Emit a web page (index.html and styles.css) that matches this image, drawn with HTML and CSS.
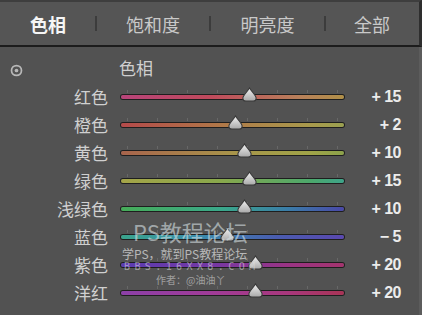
FILE: index.html
```html
<!DOCTYPE html>
<html>
<head>
<meta charset="utf-8">
<link rel="stylesheet" href="styles.css">
</head>
<body>
  <div id="tabs">
    <div class="tab active">色相</div>
    <div class="tab">饱和度</div>
    <div class="tab">明亮度</div>
    <div class="tab">全部</div>
  </div>

  <div id="panel">
    <div class="panel-header">
      <svg class="target" width="13" height="13" viewBox="0 0 12 12">
        <circle cx="6" cy="6" r="4.6" fill="none" stroke="#b8b8b8" stroke-width="1.6"/>
        <circle cx="6" cy="6" r="1.7" fill="#b8b8b8"/>
      </svg>
      <span class="panel-title">色相</span>
    </div>

    <div class="rows">
      <div class="label">红色</div>
      <div class="slider"><div class="track red"></div><svg class="thumb" style="left: 57.5%" viewBox="0 0 14 14"><use href="#knob"/></svg></div>
      <div class="value">+ 15</div>

      <div class="label">橙色</div>
      <div class="slider"><div class="track orange"></div><svg class="thumb" style="left: 51%" viewBox="0 0 14 14"><use href="#knob"/></svg></div>
      <div class="value">+ 2</div>

      <div class="label">黄色</div>
      <div class="slider"><div class="track yellow"></div><svg class="thumb" style="left: 55%" viewBox="0 0 14 14"><use href="#knob"/></svg></div>
      <div class="value">+ 10</div>

      <div class="label">绿色</div>
      <div class="slider"><div class="track green"></div><svg class="thumb" style="left: 57.5%" viewBox="0 0 14 14"><use href="#knob"/></svg></div>
      <div class="value">+ 15</div>

      <div class="label">浅绿色</div>
      <div class="slider"><div class="track aqua"></div><svg class="thumb" style="left: 55%" viewBox="0 0 14 14"><use href="#knob"/></svg></div>
      <div class="value">+ 10</div>

      <div class="label">蓝色</div>
      <div class="slider"><div class="track blue"></div><svg class="thumb" style="left: 47.5%" viewBox="0 0 14 14"><use href="#knob"/></svg></div>
      <div class="value">&minus; 5</div>

      <div class="label">紫色</div>
      <div class="slider"><div class="track purple"></div><svg class="thumb" style="left: 60%" viewBox="0 0 14 14"><use href="#knob"/></svg></div>
      <div class="value">+ 20</div>

      <div class="label">洋红</div>
      <div class="slider"><div class="track magenta"></div><svg class="thumb" style="left: 60%" viewBox="0 0 14 14"><use href="#knob"/></svg></div>
      <div class="value">+ 20</div>
    </div>

    <!-- forum watermark sitting over the sliders -->
    <div class="watermark">
      <div class="wm-big">PS教程论坛</div>
      <div class="wm-sub">学PS，就到PS教程论坛</div>
      <div class="wm-url">BBS.16XX8.COM</div>
      <div class="wm-author">作者：@油油丫</div>
    </div>
  </div>

  <svg width="0" height="0" style="position: absolute">
    <defs>
      <linearGradient id="knobfill" x1="0" y1="0" x2="0" y2="1">
        <stop offset="0" stop-color="#f2f2f2"/>
        <stop offset="1" stop-color="#a8a8a8"/>
      </linearGradient>
      <path id="knob" d="M7 0.8 C8.2 3.5 13.2 7.5 13.2 10.4 Q13.2 13.2 10.4 13.2 H3.6 Q0.8 13.2 0.8 10.4 C0.8 7.5 5.8 3.5 7 0.8 Z" fill="url(#knobfill)" stroke="#3a3a3a" stroke-width="1"/>
    </defs>
  </svg>
</body>
</html>
```

FILE: styles.css
```css
body {
  margin: 0;
  width: 422px;
  height: 315px;
  overflow: hidden;
  background-color: #525252;
  font-family: "Noto Sans CJK SC", "Noto Sans", sans-serif;
  color: #d2d2d2;
}

#tabs {
  display: flex;
  height: 43px;
  border-top: 2px solid #3e3e3e;
  border-bottom: 2px solid #1c1c1c;
  border-right: 3px solid #2e2e2e;
  width: 419px;
  background-color: #555555;
}

.tab {
  position: relative;
  display: flex;
  align-items: center;
  justify-content: center;
  font-size: 18px;
  color: #c9c9c9;
}

.tab:nth-child(1) { width: 96px; }
.tab:nth-child(2) { width: 114px; }
.tab:nth-child(3) { width: 115px; }
.tab:nth-child(4) { width: 94px; }

/* little dividers between the tabs */
.tab + .tab::before {
  content: "";
  position: absolute;
  left: -1px;
  top: 14px;
  width: 2px;
  height: 15px;
  background-color: #3c3c3c;
}

.tab.active {
  color: #f6f6f6;
  font-weight: bold;
}

#panel {
  position: relative;
  border-right: 3px solid #5c5c5c;
  width: 419px;
  height: 268px;
}

.panel-header {
  display: flex;
  align-items: center;
  height: 36px;
  padding-top: 4px;
  box-sizing: border-box;
}

.target {
  margin-left: 10px;
  margin-top: 7px;
}

.panel-title {
  margin-left: 96px;
  font-size: 17px;
  color: #cfcfcf;
}

.rows {
  display: grid;
  grid-template-columns: 108px 223px 44px;
  grid-auto-rows: 28px;
  column-gap: 13px;
  align-items: center;
}

.label {
  text-align: right;
  font-size: 17px;
  line-height: 20px;
  color: #d0d0d0;
}

.slider {
  position: relative;
  height: 28px;
}

/* faint tick marks above the track */
.slider::before {
  content: "";
  position: absolute;
  left: 6px;
  right: 6px;
  top: 7px;
  height: 3px;
  background: repeating-linear-gradient(to right, rgba(255,255,255,0.12) 0 1px, transparent 1px 30px);
}

.track {
  position: absolute;
  left: 0;
  right: 0;
  top: 12px;
  height: 4px;
  border-radius: 3px;
  box-shadow: 0 0 0 1px #1e1e1e;
}

.track.red     { background: linear-gradient(to right, #b8447a, #c04a5c 40%, #b8805a 80%, #b09048); }
.track.orange  { background: linear-gradient(to right, #b44a4a, #b07848 45%, #a89a4c 85%, #9aa050); }
.track.yellow  { background: linear-gradient(to right, #a8644c, #a8944a 50%, #a0a448 85%, #8ca24a); }
.track.green   { background: linear-gradient(to right, #a4a448, #88a84c 45%, #4ca86c 85%, #3ea48a); }
.track.aqua    { background: linear-gradient(to right, #46ac58, #3aa88a 45%, #3a7ca8 75%, #4a48a8); }
.track.blue    { background: linear-gradient(to right, #3aa48c, #3a8cac 35%, #4a5cb0 70%, #5a48b0); }
.track.purple  { background: linear-gradient(to right, #5a3cb0, #7438a4 40%, #9a3484 75%, #a4346e); }
.track.magenta { background: linear-gradient(to right, #8c40a8, #a03c98 40%, #a8387c 75%, #a83456); }

.thumb {
  position: absolute;
  top: 4px;
  width: 15px;
  height: 15px;
  margin-left: -7px;
}

.value {
  text-align: right;
  font-family: "Liberation Sans", sans-serif;
  font-weight: bold;
  font-size: 16px;
  color: #ececec;
  letter-spacing: -0.5px;
}

.watermark {
  position: absolute;
  left: 122px;
  top: 172px;
  width: 142px;
  color: rgba(225, 225, 225, 0.7);
  pointer-events: none;
}

.wm-big {
  padding-left: 11px;
  font-size: 22px;
  line-height: 24px;
  color: rgba(215, 225, 228, 0.62);
}

.wm-sub {
  margin-top: 3px;
  font-size: 12px;
  line-height: 15px;
  color: rgba(225, 225, 225, 0.72);
}

.wm-url {
  font-family: "DejaVu Sans Mono", monospace;
  font-size: 10px;
  line-height: 12px;
  letter-spacing: 4.4px;
  padding-left: 2px;
  color: rgba(225, 225, 225, 0.55);
}

.wm-author {
  padding-left: 34px;
  font-size: 10px;
  line-height: 14px;
  color: rgba(225, 225, 225, 0.55);
}
```
